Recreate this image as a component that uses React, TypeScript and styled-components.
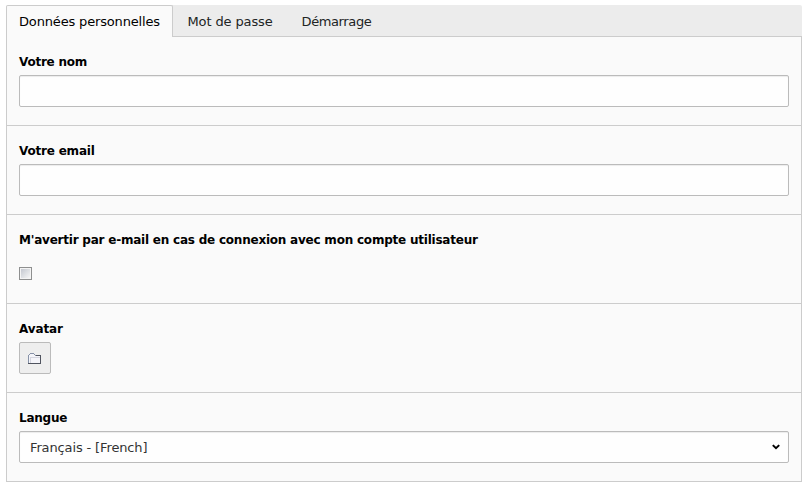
import React from "react";
import styled, { createGlobalStyle } from "styled-components";

const GlobalStyle = createGlobalStyle`
  *, *::before, *::after { box-sizing: border-box; }
  body {
    margin: 0;
    background: #fff;
    font-family: "DejaVu Sans", Verdana, sans-serif;
    font-size: 13px;
    color: #212424;
  }
`;

const Page = styled.main`
  width: 796px;
  margin: 5px 0 0 6px;
`;

const TabBar = styled.div`
  display: flex;
  height: 32px;
  background: #ececec;
  border-radius: 2px 2px 0 0;
  border-bottom: 1px solid #ccc;
`;

const Tab = styled.button<{ $active?: boolean; $width: number; $spacing: number }>`
  flex: none;
  width: ${(p) => p.$width}px;
  height: 32px;
  padding: 0 0 0 ${(p) => (p.$active ? 12 : 14.5)}px;
  text-align: left;
  white-space: nowrap;
  font: 13px "DejaVu Sans", Verdana, sans-serif;
  line-height: ${(p) => (p.$active ? 31 : 32)}px;
  padding-top: ${(p) => (p.$active ? 0 : 1)}px;
  letter-spacing: ${(p) => p.$spacing}px;
  color: ${(p) => (p.$active ? "#000" : "#212424")};
  background: ${(p) => (p.$active ? "#fafafa" : "transparent")};
  border: ${(p) => (p.$active ? "1px solid #ccc" : "0")};
  border-bottom: 0;
  border-radius: 2px 2px 0 0;
`;

const Panel = styled.form`
  background: #fafafa;
  border: 1px solid #ccc;
  border-top: 0;
`;

const Field = styled.section`
  display: flex;
  flex-direction: column;
  align-items: flex-start;
  height: 89px;
  padding: 16px 12px 0;
  border-bottom: 1px solid #ccc;
  &:last-child { height: 88px; border-bottom: 0; }
`;

const Label = styled.label<{ $spacing: number }>`
  height: 22px;
  line-height: 18px;
  font-size: 12px;
  font-weight: 700;
  white-space: nowrap;
  letter-spacing: ${(p) => p.$spacing}px;
  color: #000;
`;

const Input = styled.input`
  width: 100%;
  height: 32px;
  padding: 0 10px;
  border: 1px solid #bbb;
  border-radius: 2px;
  background: #fefefe;
  box-shadow: inset 0 1px 1px rgba(0, 0, 0, 0.075);
`;

const Checkbox = styled.input`
  appearance: none;
  width: 13px;
  height: 13px;
  margin: 14px 0 0;
  border: 1px solid #8e8f8f;
  background: linear-gradient(135deg, #c4c8d0, #f6f6f6) content-box, #f4f4f4;
  padding: 1px;
`;

const IconButton = styled.button`
  display: flex;
  align-items: center;
  justify-content: center;
  width: 32px;
  height: 32px;
  padding: 0;
  border: 1px solid #bbb;
  border-radius: 2px;
  background: #eee;
`;

const SelectBox = styled.button`
  display: flex;
  align-items: center;
  justify-content: space-between;
  width: 100%;
  height: 32px;
  padding: 0 8px 0 10px;
  border: 1px solid #bbb;
  border-radius: 2px;
  background: #fefefe;
  box-shadow: inset 0 1px 1px rgba(0, 0, 0, 0.075);
  font: 13px/28px "DejaVu Sans", Verdana, sans-serif;
  letter-spacing: -0.13px;
  color: #333;
`;

const SelectValue = styled.span`
  padding-top: 2px;
`;

const FolderIcon = () => (
  <svg width="16" height="16" viewBox="0 0 16 16" shapeRendering="crispEdges">
    <path d="M2 5h1v-1h4v1h6v8H2z" fill="#f4f4f9" />
    <path d="M3.5 13V7.5H13" fill="none" stroke="#d4d5df" />
    <path d="M1.5 13V5M2 4.5h1M3 3.5h4M7 4.5h1M8 5.5h5" fill="none" stroke="#8792a8" />
    <path d="M9 5.5h4.5v8H1" fill="none" stroke="#50545f" />
  </svg>
);

const Chevron = () => (
  <svg width="8" height="6" viewBox="0 0 8 6">
    <path d="M.8 1.1 4 4.2 7.2 1.1" fill="none" stroke="#000" strokeWidth="2" />
  </svg>
);

export default function App() {
  return (
    <>
      <GlobalStyle />
      <Page>
        <TabBar>
          <Tab $active $width={167} $spacing={-0.16}>Données personnelles</Tab>
          <Tab $width={114} $spacing={-0.12}>Mot de passe</Tab>
          <Tab $width={99} $spacing={-0.38}>Démarrage</Tab>
        </TabBar>
        <Panel>
          <Field>
            <Label htmlFor="name" $spacing={-0.24}>Votre nom</Label>
            <Input id="name" />
          </Field>
          <Field>
            <Label htmlFor="email" $spacing={-0.2}>Votre email</Label>
            <Input id="email" />
          </Field>
          <Field>
            <Label htmlFor="notify" $spacing={-0.22}>
              M'avertir par e-mail en cas de connexion avec mon compte utilisateur
            </Label>
            <Checkbox id="notify" type="checkbox" />
          </Field>
          <Field>
            <Label $spacing={-0.1}>Avatar</Label>
            <IconButton type="button" aria-label="Avatar"><FolderIcon /></IconButton>
          </Field>
          <Field>
            <Label $spacing={-0.25}>Langue</Label>
            <SelectBox type="button">
              <SelectValue>Français - [French]</SelectValue>
              <Chevron />
            </SelectBox>
          </Field>
        </Panel>
      </Page>
    </>
  );
}
